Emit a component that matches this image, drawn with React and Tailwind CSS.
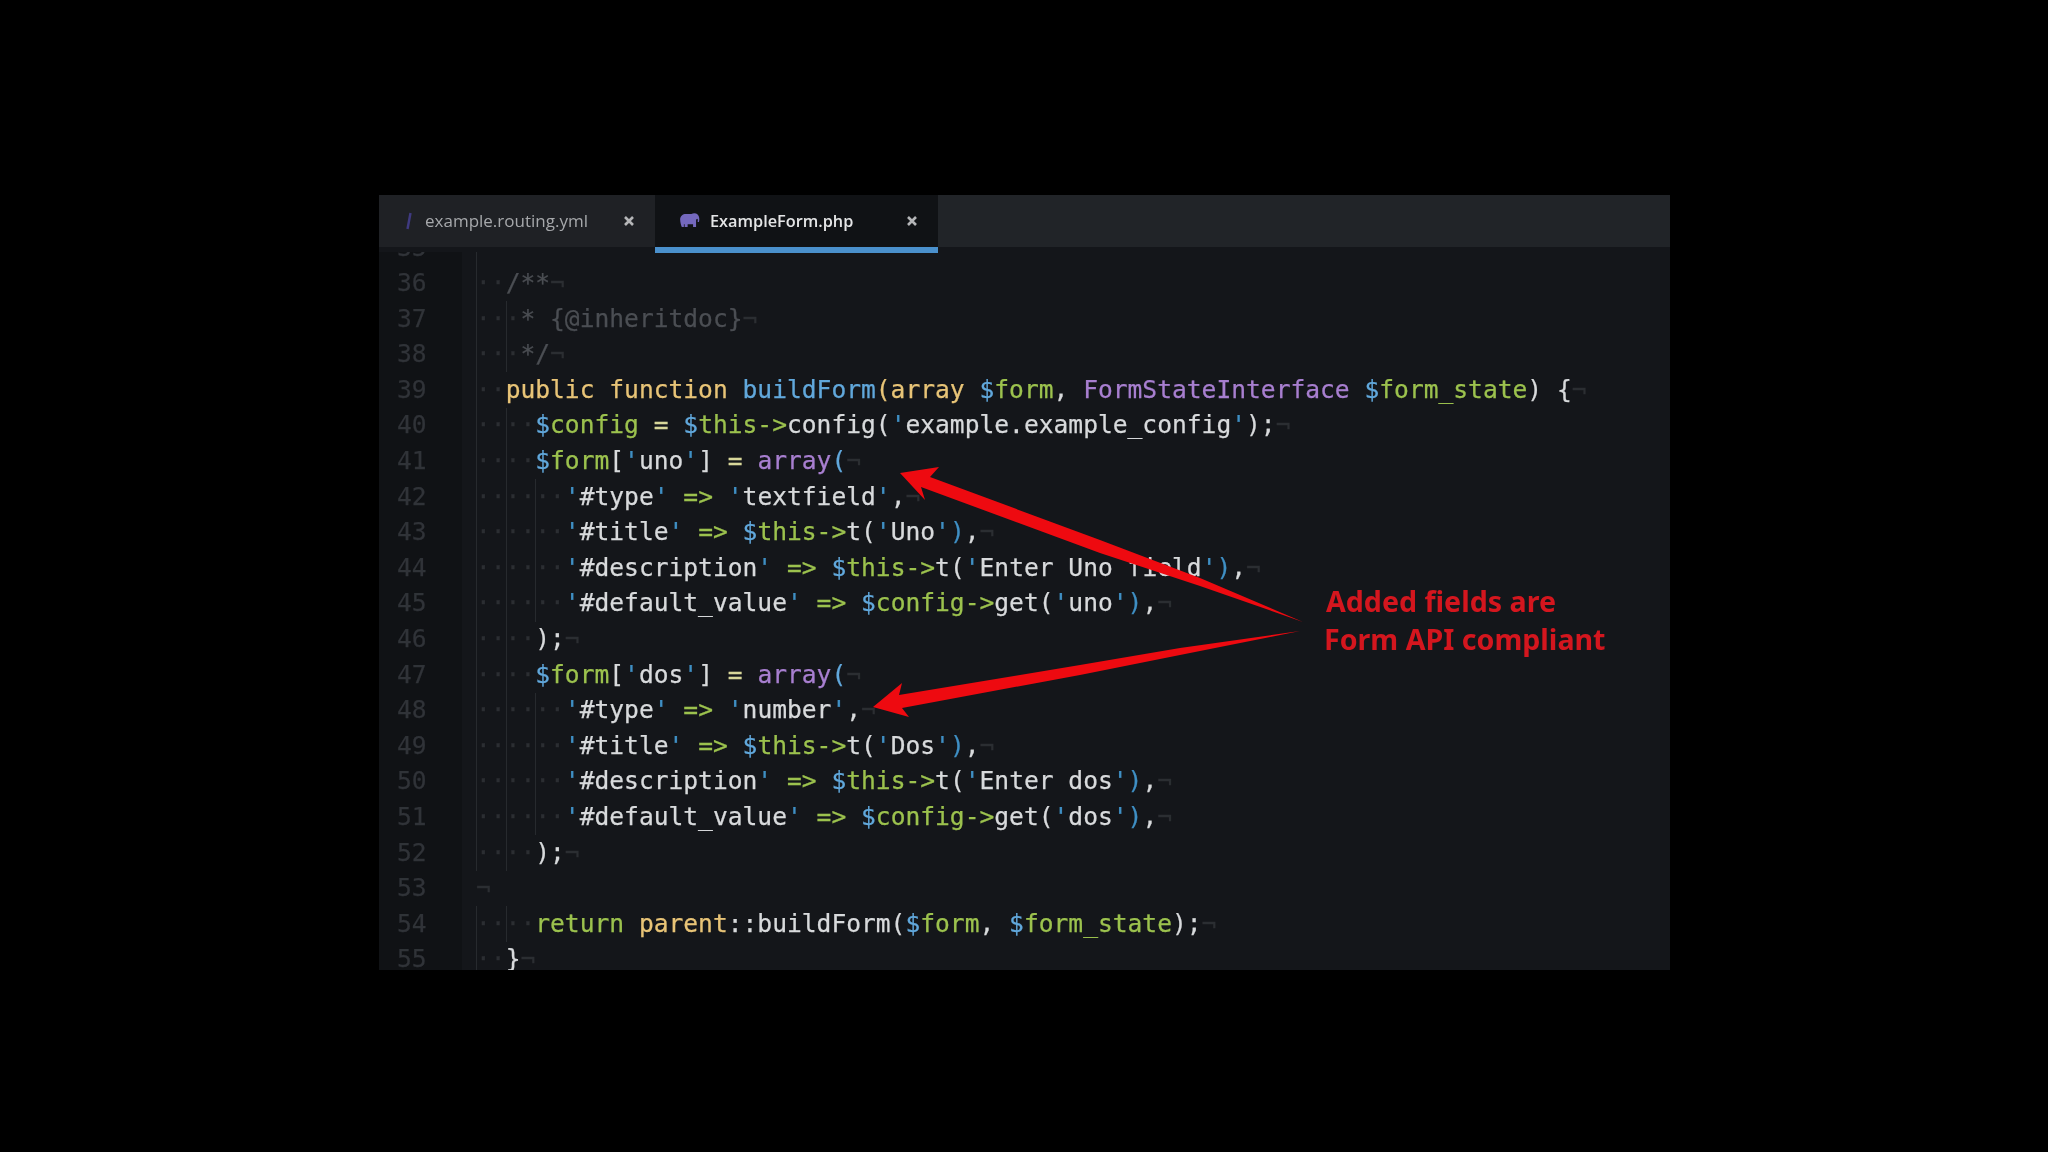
const MONO = "font-['DejaVu_Sans_Mono','Liberation_Mono',monospace]";

const K = {
  w: "text-[#d8dadc]",
  y: "text-[#e8c477]",
  b: "text-[#61a8dc]",
  g: "text-[#9cc24e]",
  p: "text-[#a87fd0]",
  q: "text-[#3f8fc4]",
  o: "text-[#d8d79a]",
  c: "text-[#4b4e53]",
  i: "text-[#2b2e32]",
};

const v = (n) => [["b", "$"], ["g", n]];
const s = (t) => [["q", "'"], ["w", t], ["q", "'"]];
const arrow = ["g", "=>"];
const thisT = [...v("this"), ["g", "->"], ["w", "t"], ["w", "("]];
const cfgGet = [...v("config"), ["g", "->"], ["w", "get("]];
const close = [["q", ")"], ["w", ","]];
const nl = ["i", "¬"];

const LINES = [
  { n: 35, dots: 0, guides: [0], t: [] },
  { n: 36, dots: 2, guides: [0], t: [["c", "/**"], nl] },
  { n: 37, dots: 3, guides: [0, 2], t: [["c", "* {@inheritdoc}"], nl] },
  { n: 38, dots: 3, guides: [0, 2], t: [["c", "*/"], nl] },
  {
    n: 39, dots: 2, guides: [0],
    t: [["y", "public function "], ["b", "buildForm"], ["y", "(array "], ...v("form"), ["w", ", "], ["p", "FormStateInterface "], ...v("form_state"), ["w", ") {"], nl],
  },
  {
    n: 40, dots: 4, guides: [0, 2],
    t: [...v("config"), ["o", " = "], ...v("this"), ["g", "->"], ["w", "config("], ...s("example.example_config"), ["w", ");"], nl],
  },
  { n: 41, dots: 4, guides: [0, 2], t: [...v("form"), ["w", "["], ...s("uno"), ["w", "]"], ["o", " = "], ["p", "array"], ["b", "("], nl] },
  { n: 42, dots: 6, guides: [0, 2, 4], t: [...s("#type"), ["w", " "], arrow, ["w", " "], ...s("textfield"), ["w", ","], nl] },
  { n: 43, dots: 6, guides: [0, 2, 4], t: [...s("#title"), ["w", " "], arrow, ["w", " "], ...thisT, ...s("Uno"), ...close, nl] },
  { n: 44, dots: 6, guides: [0, 2, 4], t: [...s("#description"), ["w", " "], arrow, ["w", " "], ...thisT, ...s("Enter Uno field"), ...close, nl] },
  { n: 45, dots: 6, guides: [0, 2, 4], t: [...s("#default_value"), ["w", " "], arrow, ["w", " "], ...cfgGet, ...s("uno"), ...close, nl] },
  { n: 46, dots: 4, guides: [0, 2], t: [["w", ");"], nl] },
  { n: 47, dots: 4, guides: [0, 2], t: [...v("form"), ["w", "["], ...s("dos"), ["w", "]"], ["o", " = "], ["p", "array"], ["b", "("], nl] },
  { n: 48, dots: 6, guides: [0, 2, 4], t: [...s("#type"), ["w", " "], arrow, ["w", " "], ...s("number"), ["w", ","], nl] },
  { n: 49, dots: 6, guides: [0, 2, 4], t: [...s("#title"), ["w", " "], arrow, ["w", " "], ...thisT, ...s("Dos"), ...close, nl] },
  { n: 50, dots: 6, guides: [0, 2, 4], t: [...s("#description"), ["w", " "], arrow, ["w", " "], ...thisT, ...s("Enter dos"), ...close, nl] },
  { n: 51, dots: 6, guides: [0, 2, 4], t: [...s("#default_value"), ["w", " "], arrow, ["w", " "], ...cfgGet, ...s("dos"), ...close, nl] },
  { n: 52, dots: 4, guides: [0, 2], t: [["w", ");"], nl] },
  { n: 53, dots: 0, guides: [], t: [nl] },
  {
    n: 54, dots: 4, guides: [0, 2],
    t: [["g", "return "], ["y", "parent"], ["w", "::buildForm("], ...v("form"), ["w", ", "], ...v("form_state"), ["w", ");"], nl],
  },
  { n: 55, dots: 2, guides: [0], t: [["w", "}"], nl] },
];

const GUIDE_POS = { 0: "left-0", 2: "left-[29.6px]", 4: "left-[59.2px]" };

function CloseX({ className }) {
  return (
    <svg viewBox="0 0 12 12" className={className} fill="none" stroke="currentColor" strokeWidth="2.6">
      <path d="M2 2l8 8M10 2l-8 8" />
    </svg>
  );
}

function Elephant() {
  return (
    <svg viewBox="0 0 22 16" className="w-[21px] h-[15px] mb-[2px] text-[#7468bd]" fill="currentColor">
      <path d="M1 7C1 3 4 1 7 1h6c1-.6 2-.8 3-.8 3 0 5 2 5.4 5 .2 1.5 0 3-.3 4.300h-1.400c.2-1.200.2-2.300 0-3.300l-1.700.8V15h-3.200v-3H9v3H5.800v-3H5v3H2.800c-.8-2-1.800-5-1.800-8z" />
    </svg>
  );
}

function Row({ line }) {
  return (
    <div className="flex h-[35.6px] shrink-0 items-center">
      <div className="w-[83px] h-full pl-[18px] flex items-center bg-[#101215] text-[#303338] shrink-0">{line.n}</div>
      <div className="relative h-full ml-[14px] flex-1 flex items-center whitespace-pre">
        {line.guides.map((g) => (
          <span key={g} className={`absolute top-0 bottom-0 w-px bg-[#272a2e] ${GUIDE_POS[g]}`} />
        ))}
        {line.dots > 0 && <span className={K.i}>{"·".repeat(line.dots)}</span>}
        {line.t.map(([k, text], i) => (
          <span key={i} className={K[k]}>{text}</span>
        ))}
      </div>
    </div>
  );
}

export default function App() {
  return (
    <div className="h-[1152px] w-[2048px] bg-black pt-[195px] pl-[379px] overflow-hidden">
      <div className="relative w-[1291px] h-[775px] flex flex-col overflow-hidden bg-[#14161a] blur-[0.6px]">
        <div className="relative z-10 flex h-[52px] shrink-0 items-start bg-[#212428] shadow-[0_5px_0_#14161a] font-['Open_Sans',sans-serif]">
          <div className="flex h-[52px] w-[276px] items-center pl-[27px] pr-[20px] bg-[#1f2125]">
            <svg viewBox="0 0 6 18" className="w-[6px] h-[18px] text-[#3f3a80]" fill="none" stroke="currentColor" strokeWidth="2.4">
              <path d="M4.500 1L1.500 17" />
            </svg>
            <span className="ml-[13px] text-[17px] text-[#a6a8ab] whitespace-nowrap">example.routing.yml</span>
            <CloseX className="ml-auto w-[12px] h-[12px] text-[#b5b6b8]" />
          </div>
          <div className="flex h-[58px] w-[283px] items-center pl-[24px] pr-[20px] bg-[#101215] border-b-[6px] border-[#4a90cc]">
            <Elephant />
            <span className="ml-[10px] text-[16.3px] font-semibold text-[#e4e5e6] whitespace-nowrap">ExampleForm.php</span>
            <CloseX className="ml-auto w-[12px] h-[12px] text-[#b5b6b8]" />
          </div>
        </div>
        <div className={`-mt-[17px] flex flex-col text-[24.6px] leading-none [-webkit-text-stroke:0.25px_currentColor] ${MONO}`}>
          {LINES.map((l) => (
            <Row key={l.n} line={l} />
          ))}
        </div>
        <svg viewBox="379 195 1291 775" className="absolute inset-0 z-20 w-[1291px] h-[775px]">
          <polygon fill="#ee0a10" points="900,473 939,467 930,477 1100,540 1200,578 1303,622 1200,586 1100,553 921,487 925,500" />
          <polygon fill="#ee0a10" points="873,707 902,683 899,695 1080,665 1180,648 1300,631 1180,655 1080,675 902,708 909,717" />
        </svg>
        <div className="absolute z-30 left-[946px] top-[387px] text-[28.6px] leading-[38px] font-bold text-[#d4161e] font-['Noto_Sans',sans-serif] whitespace-nowrap">
          <div className="ml-px">Added fields are</div>
          <div className="-ml-px">Form API compliant</div>
        </div>
      </div>
    </div>
  );
}
